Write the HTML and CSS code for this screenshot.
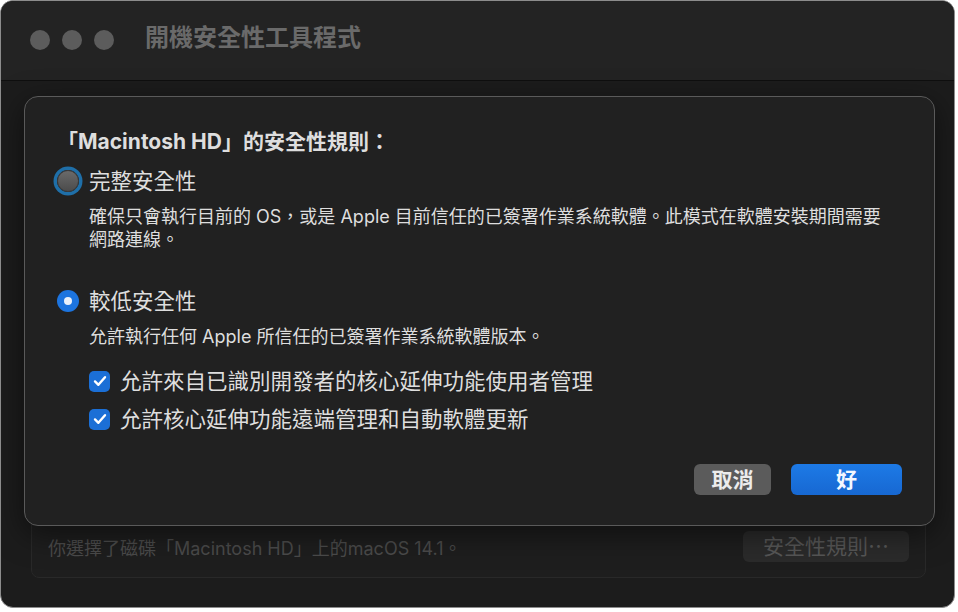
FILE: index.html
```html
<!DOCTYPE html>
<html lang="zh-Hant">
<head>
    <meta charset="UTF-8">
    <meta name="viewport" content="width=device-width, initial-scale=1.0">
    <title>開機安全性工具程式</title>
    <link rel="stylesheet" href="styles.css">
</head>
<body>
    <div class="window">
        <div class="titlebar">
            <div class="lights">
                <span class="light"></span>
                <span class="light"></span>
                <span class="light"></span>
            </div>
            <div class="title">開機安全性工具程式</div>
        </div>

        <div class="content">
            <div class="panel">
                <div class="panel-row">
                    <span class="panel-text">你選擇了磁碟「Macintosh HD」上的macOS 14.1。</span>
                    <button class="button button-dim">安全性規則⋯</button>
                </div>
            </div>
        </div>

        <!-- sheet over the window content -->
        <div class="sheet">
            <div class="sheet-heading">「Macintosh HD」的安全性規則：</div>

            <div class="option">
                <span class="radio radio-focus"></span>
                <span class="option-label">完整安全性</span>
            </div>
            <p class="option-desc">確保只會執行目前的 OS，或是 Apple 目前信任的已簽署作業系統軟體。此模式在軟體安裝期間需要網路連線。</p>

            <div class="option option-second">
                <span class="radio radio-on"></span>
                <span class="option-label">較低安全性</span>
            </div>
            <p class="option-desc">允許執行任何 Apple 所信任的已簽署作業系統軟體版本。</p>

            <div class="checks">
                <label class="check-row">
                    <span class="checkbox">
                        <svg width="14" height="12" viewBox="0 0 14 12"><path d="M2 6.4 L5.4 9.8 L12 2.2" fill="none" stroke="#fff" stroke-width="2.4" stroke-linecap="round" stroke-linejoin="round"/></svg>
                    </span>
                    <span class="check-label">允許來自已識別開發者的核心延伸功能使用者管理</span>
                </label>
                <label class="check-row">
                    <span class="checkbox">
                        <svg width="14" height="12" viewBox="0 0 14 12"><path d="M2 6.4 L5.4 9.8 L12 2.2" fill="none" stroke="#fff" stroke-width="2.4" stroke-linecap="round" stroke-linejoin="round"/></svg>
                    </span>
                    <span class="check-label">允許核心延伸功能遠端管理和自動軟體更新</span>
                </label>
            </div>

            <div class="sheet-buttons">
                <button class="button button-cancel">取消</button>
                <button class="button button-ok">好</button>
            </div>
        </div>
    </div>
</body>
</html>
```

FILE: styles.css
```css
body {
    margin: 0;
    background: #ffffff;
    font-family: Inter, "Noto Sans CJK TC", sans-serif;
}
.window {
    position: relative;
    width: 953px;
    height: 606px;
    border: 1px solid #8c8c8c;
    border-radius: 13px;
    background: #1c1c1c;
    overflow: hidden;
    display: flex;
    flex-direction: column;
}
.titlebar {
    height: 80px;
    flex-shrink: 0;
    box-sizing: border-box;
    background: #232323;
    border-bottom: 1px solid #0f0f0f;
    display: flex;
    align-items: center;
    padding: 0 0 2px 29px;
}
.lights {
    display: flex;
    gap: 12px;
}
.light {
    width: 20px;
    height: 20px;
    border-radius: 50%;
    background: #5c5c5c;
}
.title {
    margin-left: 31px;
    font-size: 24px;
    font-weight: 700;
    line-height: 28px;
    margin-top: -3px;
    color: #6a6a6a;
}
.content {
    flex: 1;
    padding: 16px 28px 29px 30px;
    display: flex;
}
.panel {
    flex: 1;
    border: 1px solid #292929;
    border-radius: 8px;
    background: #1e1e1e;
    display: flex;
    flex-direction: column;
    justify-content: flex-end;
    padding: 0 16px 15px 16px;
}
.panel-row {
    display: flex;
    align-items: center;
    justify-content: space-between;
}
.panel-text {
    font-size: 18px;
    color: #4b4b4b;
}
.button {
    font-family: inherit;
    border: none;
    border-radius: 6px;
    height: 31px;
    font-size: 21px;
    line-height: 31px;
    padding: 0;
}
.button-dim {
    width: 166px;
    background: #2b2b2b;
    color: #575757;
}
.sheet {
    position: absolute;
    left: 23px;
    top: 95px;
    width: 845px;
    padding: 32px 32px 30px 32px;
    background: #212121;
    border: 1px solid #5a5a5a;
    border-radius: 14px;
    box-shadow: 0 8px 30px rgba(0,0,0,0.5);
    color: #dedede;
}
.sheet-heading {
    font-size: 21px;
    font-weight: 700;
    line-height: 26px;
}
.option {
    display: flex;
    align-items: center;
    gap: 10px;
    height: 28px;
    margin-top: 12px;
}
.option-second {
    margin-top: 36px;
}
.radio {
    width: 22px;
    height: 22px;
    border-radius: 50%;
    box-sizing: border-box;
    flex-shrink: 0;
}
.radio-focus {
    background: linear-gradient(#6a6a6a, #4c4c4c);
    border: 1px solid #3d3d3d;
    box-shadow: 0 0 0 3.5px #1f6fa8;
}
.radio-on {
    background: #1c74df;
    display: flex;
    align-items: center;
    justify-content: center;
}
.radio-on::after {
    content: "";
    width: 8px;
    height: 8px;
    border-radius: 50%;
    background: #eaf1fb;
}
.option-label {
    font-size: 21.5px;
    line-height: 28px;
}
.option-desc {
    margin: 10px 0 0 32px;
    font-size: 18px;
    line-height: 23px;
    max-width: 805px;
}
.checks {
    margin: 19px 0 0 32px;
    display: flex;
    flex-direction: column;
    gap: 10px;
}
.check-row {
    display: flex;
    align-items: center;
    gap: 10px;
    height: 28px;
}
.checkbox {
    width: 21px;
    height: 21px;
    border-radius: 5px;
    background: #1b6fd6;
    display: flex;
    align-items: center;
    justify-content: center;
}
.check-label {
    font-size: 21.5px;
    line-height: 28px;
}
.sheet-buttons {
    margin-top: 31px;
    display: flex;
    justify-content: flex-end;
    gap: 20px;
}
.button-cancel {
    width: 77px;
    background: #5b5b5b;
    color: #ececec;
    font-weight: 600;
}
.button-ok {
    width: 111px;
    background: linear-gradient(#1d7ae6, #1768d2);
    color: #f4f8ff;
    font-weight: 600;
}
```
